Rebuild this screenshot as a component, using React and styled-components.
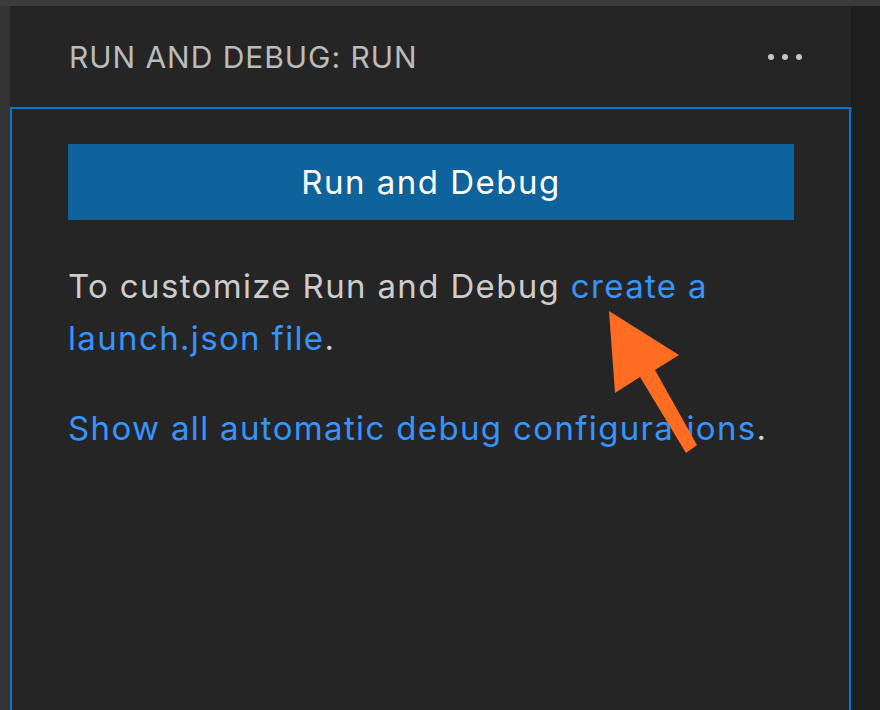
import React from "react";
import styled, { createGlobalStyle } from "styled-components";

const Global = createGlobalStyle`
  html, body {
    margin: 0;
    padding: 0;
    background: #1e1e1e;
  }
  body {
    font-family: Inter, "Noto Sans", sans-serif;
  }
`;

const Screen = styled.div`
  width: 880px;
  height: 710px;
  display: flex;
  flex-direction: column;
  background: #1e1e1e;
  overflow: hidden;
`;

const TopStrip = styled.div`
  height: 6px;
  background: #3c3c3c;
  flex: none;
`;

const Body = styled.div`
  flex: 1;
  display: flex;
`;

const ActivityEdge = styled.div`
  width: 10px;
  background: #333333;
  flex: none;
`;

const Sidebar = styled.div`
  width: 841px;
  background: #252526;
  display: flex;
  flex-direction: column;
  position: relative;
`;

const Header = styled.div`
  height: 101px;
  display: flex;
  align-items: center;
  justify-content: space-between;
  padding: 0 49px 0 59px;
  box-sizing: border-box;
`;

const Title = styled.h2`
  margin: 0;
  font-size: 30px;
  font-weight: 400;
  color: #bbbbbb;
  letter-spacing: 0.95px;
`;

const Dots = styled.div`
  display: flex;
  gap: 8px;
`;

const Dot = styled.span`
  width: 6px;
  height: 6px;
  border-radius: 50%;
  background: #c5c5c5;
`;

const Focus = styled.div`
  flex: 1;
  border: 2px solid #0078d4;
  border-bottom: none;
  padding: 35px 55px 0 56px;
  display: flex;
  flex-direction: column;
`;

const Button = styled.button`
  height: 76px;
  border: none;
  background: #0e639c;
  color: #ffffff;
  font-family: inherit;
  font-size: 33px;
  letter-spacing: 1.5px;
  cursor: pointer;
`;

const Para = styled.p`
  margin: ${(p) => p.$top}px 0 0;
  font-size: 33px;
  line-height: 52px;
  letter-spacing: 1.35px;
  color: #cccccc;
`;

const Link = styled.a`
  color: #3794ff;
  text-decoration: none;
`;

const Arrow = styled.svg`
  position: absolute;
  left: 0;
  top: 0;
  pointer-events: none;
`;

export default function App() {
  return (
    <Screen>
      <Global />
      <TopStrip />
      <Body>
        <ActivityEdge />
        <Sidebar>
          <Header>
            <Title>RUN AND DEBUG: RUN</Title>
            <Dots>
              <Dot />
              <Dot />
              <Dot />
            </Dots>
          </Header>
          <Focus>
            <Button>Run and Debug</Button>
            <Para $top={40}>
              To customize Run and Debug <Link href="#">create a launch.json file</Link>.
            </Para>
            <Para $top={38}>
              <Link href="#">Show all automatic debug configurations</Link>.
            </Para>
          </Focus>
          {/* annotation arrow, coordinates relative to the sidebar (x-10, y-6) */}
          <Arrow width="841" height="704" viewBox="0 0 841 704">
            <polygon
              points="599,305 669,349 645,364 687,439 676,447 630,371 605,387"
              fill="#ff6c22"
            />
          </Arrow>
        </Sidebar>
        <div />
      </Body>
    </Screen>
  );
}
